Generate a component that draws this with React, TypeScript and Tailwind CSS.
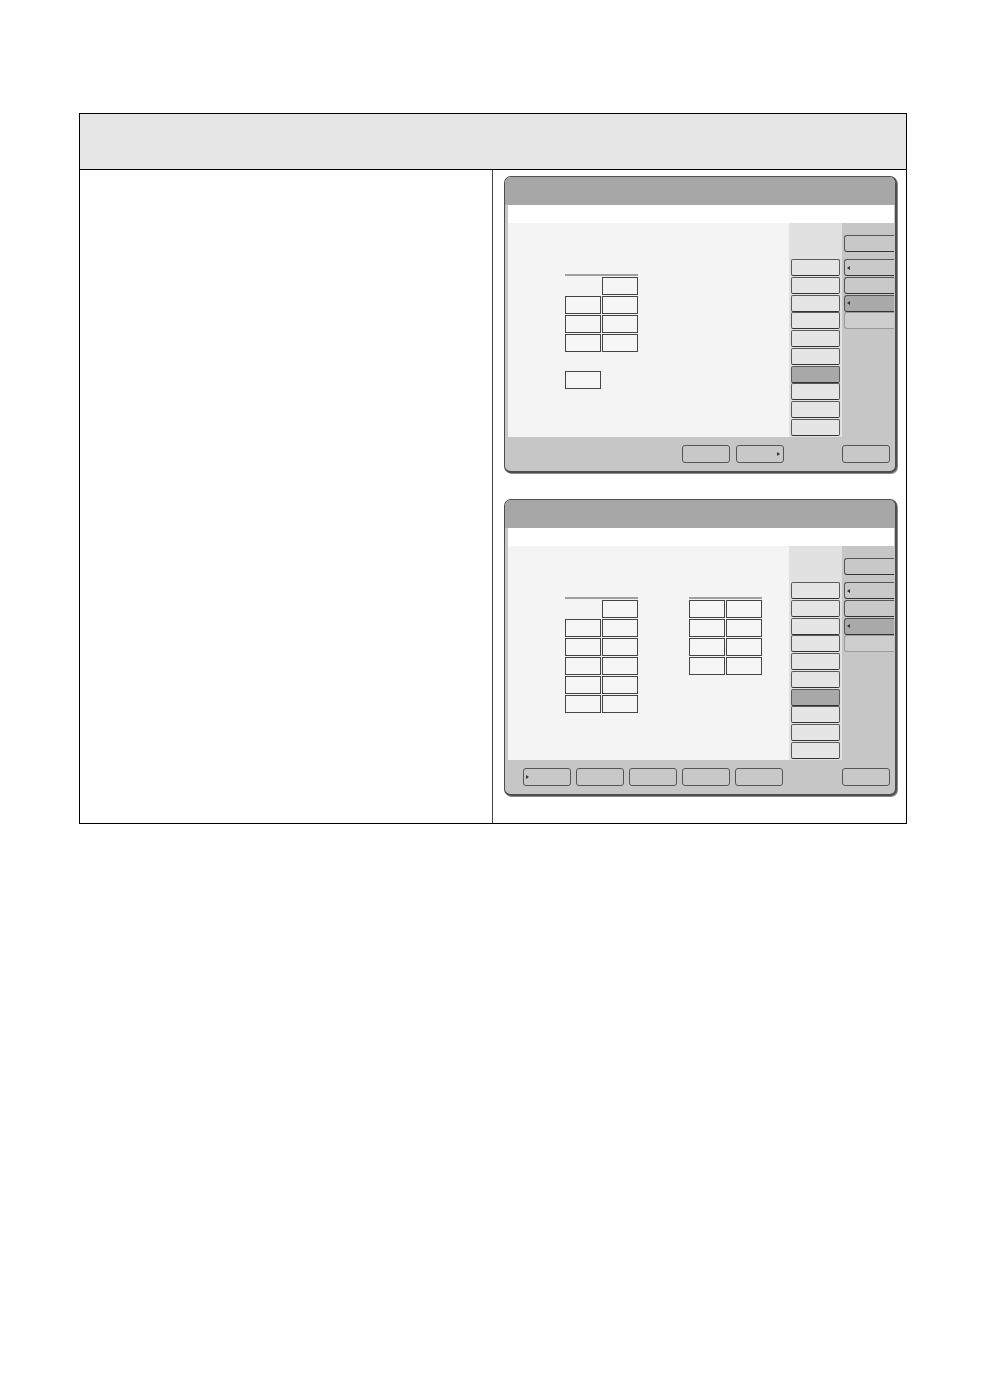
import React from "react";

type Cell = 0 | 1;

const Box = ({ on }: { on: Cell }) =>
  on ? (
    <div className="w-[36px] h-[18px] border-[1.5px] border-[#454545] bg-[#f6f6f6]" />
  ) : (
    <div className="w-[36px] h-[18px]" />
  );

const Table = ({ rows }: { rows: Cell[][] }) => (
  <div className="flex flex-col w-[73px]">
    <div className="h-[2px] w-[73px] bg-[#a0a0a0]" />
    <div className="mt-[1px] grid grid-cols-[36px_36px] gap-[1px]">
      {rows.flatMap((r, i) => r.map((c, j) => <Box key={`${i}-${j}`} on={c} />))}
    </div>
  </div>
);

const LeftTri = () => (
  <div className="w-0 h-0 border-y-[2px] border-y-transparent border-r-[3px] border-r-[#333]" />
);
const RightTri = () => (
  <div className="w-0 h-0 border-y-[2px] border-y-transparent border-l-[3px] border-l-[#333]" />
);

const Col1 = () => (
  <div className="w-[53px] bg-[#e1e1e1] pt-[36px] pl-[2px] flex flex-col gap-[0.75px]">
    {Array.from({ length: 10 }).map((_, i) => (
      <div
        key={i}
        className={`w-[49px] h-[17px] border border-[#5a5a5a] border-b-[#333] rounded-[2px] ${
          i === 6 ? "bg-[#a8a8a8]" : "bg-[#e5e5e5]"
        }`}
      />
    ))}
  </div>
);

const Col2 = () => (
  <div className="w-[52px] pt-[12px] pl-[2px] flex flex-col">
    <div className="w-[50px] h-[17px] border border-r-0 border-[#555] border-b-[#333] rounded-l-[3px] bg-[#c8c8c8]" />
    <div className="mt-[7px] flex flex-col gap-[0.75px]">
      <div className="w-[50px] h-[17px] border border-r-0 border-[#555] border-b-[#333] rounded-l-[3px] bg-[#c9c9c9] flex items-center pl-[2px]">
        <LeftTri />
      </div>
      <div className="w-[50px] h-[17px] border border-r-0 border-[#555] border-b-[#333] rounded-l-[3px] bg-[#c9c9c9]" />
      <div className="w-[50px] h-[17px] border border-r-0 border-[#555] border-b-[#333] rounded-l-[3px] bg-[#a9a9a9] flex items-center pl-[2px]">
        <LeftTri />
      </div>
      <div className="w-[50px] h-[17px] border border-r-0 border-[#9a9a9a] rounded-l-[3px] bg-[#cecece]" />
    </div>
  </div>
);

const BtmBtn = ({ arrow }: { arrow?: "left" | "right" }) => (
  <div
    className={`w-[48px] h-[18px] border border-[#555] rounded-[3px] bg-[#c8c8c8] flex items-center ${
      arrow === "right" ? "justify-end pr-[3px]" : "pl-[2px]"
    }`}
  >
    {arrow === "right" && <RightTri />}
    {arrow === "left" && <RightTri />}
  </div>
);

const Screen = ({ variant }: { variant: 1 | 2 }) => (
  <div className="w-[393px] h-[297px] shrink-0 border border-r-2 border-b-2 border-[#4d4d4d] rounded-[7px] bg-[#c6c6c6] overflow-hidden flex flex-col shadow-[1px_1px_0_#8a8a8a]">
    <div className="h-[28px] bg-[#a6a6a6] shrink-0" />
    <div className="px-[3px] pr-[1px] shrink-0">
      <div className="h-[18px] bg-white" />
      <div className="h-[214px] flex">
        <div className="w-[281px] bg-[#f4f4f4] pt-[51px] pl-[57px]">
          {variant === 1 ? (
            <div className="flex flex-col">
              <Table
                rows={[
                  [0, 1],
                  [1, 1],
                  [1, 1],
                  [1, 1],
                ]}
              />
              <div className="mt-[19px]">
                <Box on={1} />
              </div>
            </div>
          ) : (
            <div className="flex gap-[51px]">
              <Table
                rows={[
                  [0, 1],
                  [1, 1],
                  [1, 1],
                  [1, 1],
                  [1, 1],
                  [1, 1],
                ]}
              />
              <Table
                rows={[
                  [1, 1],
                  [1, 1],
                  [1, 1],
                  [1, 1],
                ]}
              />
            </div>
          )}
        </div>
        <Col1 />
        <Col2 />
      </div>
    </div>
    <div className="flex-1 flex items-start pt-[8px] pr-[5px]">
      {variant === 1 ? (
        <div className="ml-[177px] flex gap-[6px]">
          <BtmBtn />
          <BtmBtn arrow="right" />
        </div>
      ) : (
        <div className="ml-[18px] flex gap-[5px]">
          <BtmBtn arrow="left" />
          <BtmBtn />
          <BtmBtn />
          <BtmBtn />
          <BtmBtn />
        </div>
      )}
      <div className="ml-auto">
        <BtmBtn />
      </div>
    </div>
  </div>
);

export default function App() {
  return (
    <div className="w-[986px] h-[1383px] bg-white pt-[113px] pl-[79px]" style={{ fontFamily: '"Liberation Sans", Arial, sans-serif' }}>
      <div className="w-[828px] border border-black flex flex-col">
        <div className="h-[56px] bg-[#e6e6e6] border-b-[1.5px] border-black" />
        <div className="flex h-[653px]">
          <div className="w-[413px] border-r border-[#444]" />
          <div className="flex-1 pl-[11px] pt-[6px] flex flex-col gap-[26px]">
            <Screen variant={1} />
            <Screen variant={2} />
          </div>
        </div>
      </div>
    </div>
  );
}
